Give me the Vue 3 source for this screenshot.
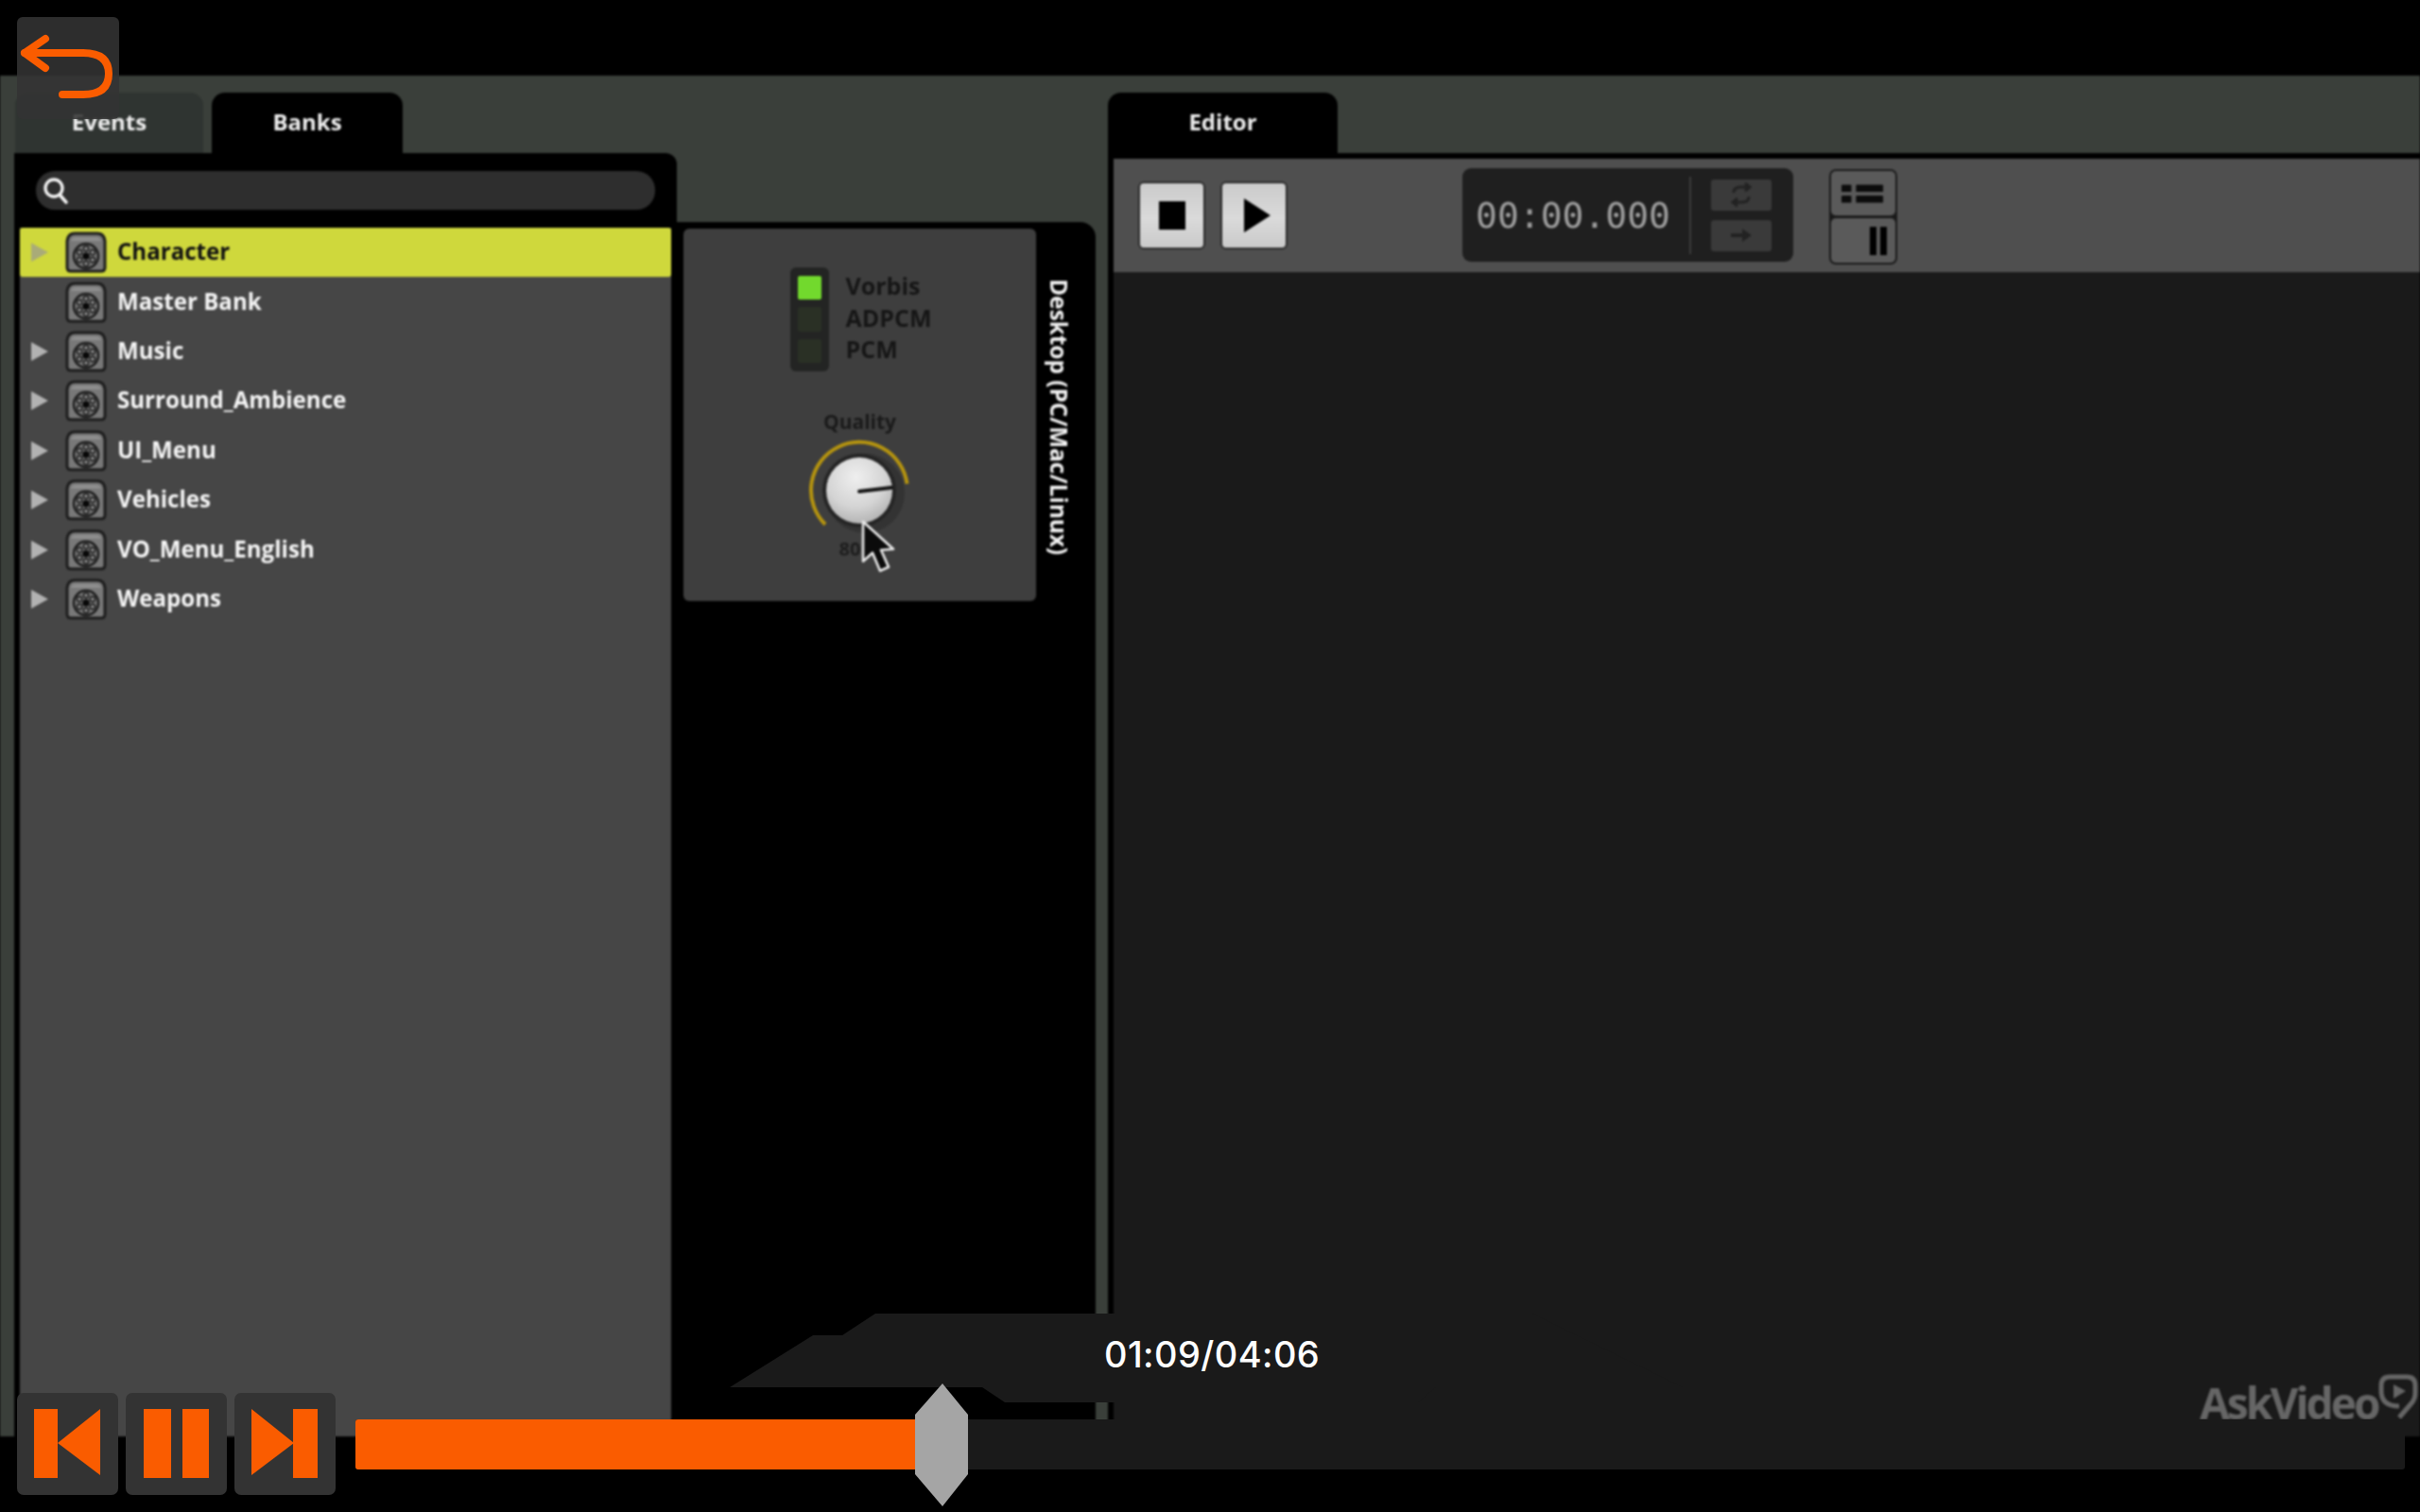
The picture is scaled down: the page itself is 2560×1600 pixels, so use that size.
<template>
  <div class="screen">
    <header class="top-bar"></header>

    <main class="workspace">
      <section class="browser">
        <nav class="tabs">
          <div class="tab tab--off">Events</div>
          <div class="tab tab--on">Banks</div>
        </nav>
        <div class="browser-panel">
          <div class="search">
            <svg width="30" height="30" viewBox="0 0 30 30">
              <circle cx="13" cy="12" r="9" fill="none" stroke="#f1f1f1" stroke-width="3.4" />
              <path d="M19 19 L26 27" stroke="#f1f1f1" stroke-width="3.6" stroke-linecap="round" />
            </svg>
          </div>
          <ul class="tree">
            <li v-for="bank in banks" :key="bank.name" class="row" :class="{ 'row--active': bank.active }">
              <span class="arrow" :class="{ 'arrow--none': !bank.children }"></span>
              <svg class="bank-icon" width="44" height="44" viewBox="0 0 44 44">
                <path d="M2 10 Q3 2 10 2 H34 Q41 2 42 10 V38 Q42 42 38 42 H6 Q2 42 2 38 Z" fill="#787878" stroke="#1d1d1d" stroke-width="3" stroke-linejoin="round" />
                <path d="M6 10 Q7 6 11 6 H33 Q37 6 38 10 Z" fill="#8e8e8e" />
                <circle cx="22" cy="26" r="13" fill="none" stroke="#1c1c1c" stroke-width="2.4" />
                <circle cx="22" cy="26" r="3.8" fill="#080808" />
                <circle v-for="a in spokes" :key="a" :cx="22 + 8 * Math.cos(a)" :cy="26 + 8 * Math.sin(a)" r="2.6" fill="#999" stroke="#1c1c1c" stroke-width="1.6" />
              </svg>
              <span class="row-label">{{ bank.name }}</span>
            </li>
          </ul>
        </div>
      </section>

      <section class="platform">
        <div class="platform-card">
          <div class="encoding">
            <div class="leds">
              <span class="led led--on"></span>
              <span class="led"></span>
              <span class="led"></span>
            </div>
            <div class="encoding-names">
              <span>Vorbis</span>
              <span>ADPCM</span>
              <span>PCM</span>
            </div>
          </div>
          <div class="quality">Quality</div>
          <svg class="knob" width="130" height="126" viewBox="0 0 130 126">
            <defs>
              <radialGradient id="knobFill" cx="45%" cy="30%" r="75%">
                <stop offset="0" stop-color="#efefef" />
                <stop offset="0.6" stop-color="#d4d4d4" />
                <stop offset="1" stop-color="#aeaeae" />
              </radialGradient>
            </defs>
            <circle cx="70" cy="60" r="42" fill="#333" />
            <path d="M28 93 A51 51 0 1 1 114.5 50" fill="none" stroke="#b4930f" stroke-width="4" />
            <circle cx="64" cy="57" r="39" fill="#252525" />
            <circle cx="64" cy="57" r="35" fill="url(#knobFill)" />
            <path d="M64 58 L98 54" stroke="#151515" stroke-width="4" stroke-linecap="round" />
          </svg>
          <div class="quality-value">80</div>
          <svg class="cursor" width="40" height="60" viewBox="0 0 40 60">
            <path d="M3 2 V44 L13 35 L21 54 L30 50 L22 32 L35 31 Z" fill="#0b0b0b" stroke="#e8e8e8" stroke-width="2.6" stroke-linejoin="round" />
          </svg>
        </div>
        <div class="platform-name">Desktop (PC/Mac/Linux)</div>
      </section>

      <section class="editor">
        <nav class="tabs tabs--editor">
          <div class="tab tab--on tab--editor">Editor</div>
        </nav>
        <div class="editor-panel">
          <div class="transport">
            <div class="play-buttons">
              <button class="key">
                <span class="stop-shape"></span>
              </button>
              <button class="key">
                <span class="play-shape"></span>
              </button>
            </div>
            <div class="timer">
              <span class="timer-value">00:00.000</span>
              <span class="timer-sep"></span>
              <div class="timer-modes">
                <span class="mode">
                  <svg width="28" height="28" viewBox="0 0 28 28" fill="none" stroke="#222" stroke-width="3">
                    <path d="M6 12 Q6 6 13 6 H22 M18 2 L23 6 L18 10" />
                    <path d="M22 16 Q22 22 15 22 H6 M10 18 L5 22 L10 26" />
                  </svg>
                </span>
                <span class="mode">
                  <svg width="28" height="20" viewBox="0 0 28 20">
                    <path d="M3 8 H15 V3 L25 10 L15 17 V12 H3 Z" fill="#222" />
                  </svg>
                </span>
              </div>
            </div>
            <div class="view-buttons">
              <span class="view-btn">
                <svg width="48" height="24" viewBox="0 0 48 24" fill="#0c0c0c">
                  <rect x="0" y="2" width="11" height="8" rx="1" />
                  <rect x="16" y="2" width="30" height="8" rx="1" />
                  <rect x="0" y="14" width="11" height="8" rx="1" />
                  <rect x="16" y="14" width="30" height="8" rx="1" />
                </svg>
              </span>
              <span class="view-btn view-btn--pause">
                <i></i>
                <i></i>
              </span>
            </div>
          </div>
          <div class="editor-body"></div>
        </div>
      </section>
    </main>

    <button class="back-btn">
      <svg width="108" height="108" viewBox="0 0 108 108" fill="none" stroke="#fa5c00" stroke-width="8" stroke-linecap="round" stroke-linejoin="round">
        <path d="M30 23 L8 38 L30 54" />
        <path d="M8 38 H70 Q97 38 97 60 Q97 82 70 82 H48" />
      </svg>
    </button>

    <svg class="time-shape" width="1100" height="100" viewBox="0 0 1100 100">
      <polygon points="154,0 849,0 1008,78 747,78 728,94 291,94 267,78 0,78 88,23 119,23" fill="#1a1a1a" />
    </svg>
    <div class="time-label">01:09/04:06</div>

    <div class="watermark">
      <span>AskVideo</span>
      <svg width="42" height="48" viewBox="0 0 42 48">
        <path d="M12 3 H30 Q39 3 39 12 V20 Q39 27 34 32 L22 46 M22 34 Q3 34 3 18 V12 Q3 3 12 3" fill="none" stroke="#666" stroke-width="5" />
        <path d="M16 11 L29 18 L16 26 Z" fill="#666" />
      </svg>
    </div>

    <footer class="player">
      <div class="player-buttons">
        <button class="pbtn">
          <svg width="72" height="74" viewBox="0 0 72 74" fill="#fa5c00">
            <rect x="0" y="0" width="25" height="73" />
            <path d="M25 36 L70 0 V70 Z" />
          </svg>
        </button>
        <button class="pbtn">
          <svg width="70" height="74" viewBox="0 0 70 74" fill="#fa5c00">
            <rect x="0" y="0" width="29" height="73" />
            <rect x="41" y="0" width="28" height="73" />
          </svg>
        </button>
        <button class="pbtn">
          <svg width="72" height="74" viewBox="0 0 72 74" fill="#fa5c00">
            <path d="M0 0 L45 36 L0 70 Z" />
            <rect x="44" y="0" width="26" height="73" />
          </svg>
        </button>
      </div>
      <div class="track">
        <div class="track-fill" :style="{ width: progress + 'px' }"></div>
        <svg class="thumb" width="56" height="130" viewBox="0 0 56 130">
          <polygon points="29,0 56,33 56,96 29,130 0,96 0,33" fill="#a5a5a5" />
        </svg>
      </div>
    </footer>
  </div>
</template>

<script setup>
const banks = [
  { name: 'Character', children: true, active: true },
  { name: 'Master Bank', children: false },
  { name: 'Music', children: true },
  { name: 'Surround_Ambience', children: true },
  { name: 'UI_Menu', children: true },
  { name: 'Vehicles', children: true },
  { name: 'VO_Menu_English', children: true },
  { name: 'Weapons', children: true },
]

const spokes = [0, 1, 2, 3, 4, 5].map(i => (i * Math.PI) / 3 + Math.PI / 6)

const progress = 594
</script>

<style>
html, body {
  margin: 0;
  background: #000;
}
</style>

<style scoped>
.screen {
  position: relative;
  width: 2560px;
  height: 1600px;
  overflow: hidden;
  background: #000;
  font-family: "Open Sans", "Liberation Sans", sans-serif;
}

button {
  border: 0;
  padding: 0;
  font: inherit;
}

.top-bar {
  height: 80px;
  background: #000;
}

.workspace {
  display: flex;
  height: 1440px;
  padding-left: 15px;
  box-sizing: border-box;
  background: #3a3f3a;
  overflow: hidden;
  filter: blur(0.8px);
}

/* banks browser */
.browser {
  display: flex;
  flex-direction: column;
  width: 701px;
  flex: none;
}

.tabs {
  display: flex;
  height: 64px;
  margin-top: 18px;
  padding-left: 1px;
  gap: 9px;
  flex: none;
}

.tab {
  display: flex;
  align-items: center;
  justify-content: center;
  box-sizing: border-box;
  padding-bottom: 4px;
  border-radius: 14px 14px 0 0;
  font-size: 24px;
  font-weight: 700;
  color: #eee;
}

.tab--off {
  width: 199px;
  background: #2f3431;
}

.tab--on {
  width: 202px;
  background: #000;
}

.browser-panel {
  flex: 1;
  display: flex;
  flex-direction: column;
  background: #000;
  border-radius: 0 12px 0 0;
}

.search {
  display: flex;
  align-items: center;
  height: 41px;
  margin: 19px 23px 19px 23px;
  padding-left: 6px;
  box-sizing: border-box;
  border-radius: 20px;
  background: #2e2e2e;
}

.tree {
  flex: 1;
  margin: 0 6px;
  padding: 0;
  list-style: none;
  background: #464646;
}

.row {
  display: flex;
  align-items: center;
  height: 52.4px;
  padding-left: 12px;
  box-sizing: border-box;
  color: #f4f4f4;
  font-size: 24.1px;
  font-weight: 700;
}

.row--active {
  background: #cfd83c;
  border-radius: 3px;
  color: #111;
}

.arrow {
  width: 0;
  height: 0;
  flex: none;
  margin-right: 18px;
  border-left: 18px solid #b2b2b2;
  border-top: 10px solid transparent;
  border-bottom: 10px solid transparent;
}

.row--active .arrow {
  border-left-color: #a9ab78;
}

.arrow--none {
  border-left-color: transparent;
}

.bank-icon {
  flex: none;
}

.row-label {
  margin: -3px 0 0 11px;
  white-space: nowrap;
}

/* platform settings */
.platform {
  display: flex;
  align-items: flex-start;
  width: 443px;
  flex: none;
  margin-top: 155px;
  padding: 7px 0 0 7px;
  box-sizing: border-box;
  background: #000;
  border-radius: 0 16px 0 0;
}

.platform-card {
  position: relative;
  display: flex;
  flex-direction: column;
  align-items: center;
  width: 373px;
  height: 394px;
  padding-top: 41px;
  box-sizing: border-box;
  flex: none;
  background: #3e3e3e;
  border-radius: 6px;
}

.encoding {
  display: flex;
  gap: 18px;
  margin-left: 2px;
}

.leds {
  display: flex;
  flex-direction: column;
  gap: 8px;
  width: 41px;
  height: 110px;
  padding: 9px 8px;
  box-sizing: border-box;
  border-radius: 6px;
  background: #232423;
}

.led {
  height: 26px;
  border-radius: 2px;
  background: #2a3025;
}

.led--on {
  background: #72d92d;
}

.encoding-names {
  display: flex;
  flex-direction: column;
  gap: 0;
  padding-top: 3px;
  color: #161616;
  font-size: 25px;
  font-weight: 700;
  line-height: 33.5px;
}

.quality {
  margin-top: 38px;
  color: #1a1a1a;
  font-size: 21px;
  font-weight: 700;
  line-height: 30px;
}

.knob {
  margin-top: 1px;
  margin-left: 0;
}

.quality-value {
  width: 44px;
  margin-top: -20px;
  color: #1e1e1e;
  font-size: 20px;
  font-weight: 700;
  line-height: 26px;
}

.cursor {
  position: absolute;
  left: 187px;
  top: 308px;
}

.platform-name {
  margin: 53px 0 0 8px;
  writing-mode: vertical-rl;
  color: #f2f2f2;
  font-size: 24.4px;
  font-weight: 700;
  white-space: nowrap;
}

/* editor */
.editor {
  display: flex;
  flex-direction: column;
  flex: 1;
  margin-left: 13px;
  min-width: 0;
}

.tabs--editor {
  padding-left: 0;
}

.tab--editor {
  width: 243px;
}

.editor-panel {
  flex: 1;
  display: flex;
  flex-direction: column;
  padding: 6px 0 0 6px;
  background: #000;
}

.transport {
  display: flex;
  align-items: flex-start;
  height: 120px;
  flex: none;
  box-sizing: border-box;
  background: #4f4f4f;
}

.play-buttons {
  display: flex;
  gap: 16px;
  margin: 24px 0 0 26px;
}

.key {
  display: flex;
  align-items: center;
  justify-content: center;
  width: 71px;
  height: 72px;
  box-sizing: border-box;
  border: 2px solid #2a2a2a;
  border-radius: 6px;
  background: linear-gradient(#cbcbcb, #dadada 55%, #cacaca);
}

.stop-shape {
  width: 28px;
  height: 30px;
  background: #000;
}

.play-shape {
  width: 0;
  height: 0;
  margin-left: 6px;
  border-left: 28px solid #000;
  border-top: 18px solid transparent;
  border-bottom: 18px solid transparent;
}

.timer {
  display: flex;
  align-items: center;
  width: 350px;
  height: 99px;
  margin: 10px 0 0 185px;
  padding-left: 14px;
  box-sizing: border-box;
  border-radius: 9px;
  background: #1f1f1f;
}

.timer-value {
  width: 226px;
  color: #9c9c9c;
  font-family: "DejaVu Sans Mono", "Liberation Mono", monospace;
  font-size: 38px;
  white-space: nowrap;
}

.timer-sep {
  width: 2px;
  height: 82px;
  background: #3a3a3a;
}

.timer-modes {
  display: flex;
  flex-direction: column;
  gap: 10px;
  margin-left: 21px;
}

.mode {
  display: flex;
  align-items: center;
  justify-content: center;
  width: 64px;
  height: 33px;
  border-radius: 3px;
  background: #3a3a3a;
}

.view-buttons {
  display: flex;
  flex-direction: column;
  gap: 0;
  width: 72px;
  margin: 11px 0 0 38px;
  padding: 2px;
  box-sizing: border-box;
  border-radius: 7px;
  background: #1a1a1a;
}

.view-btn {
  display: flex;
  align-items: center;
  justify-content: center;
  height: 47px;
  border-radius: 5px;
  background: #5a5a5a;
}

.view-btn + .view-btn {
  margin-top: 3px;
}

.view-btn svg {
  width: 46px;
}

.view-btn--pause {
  justify-content: flex-end;
  gap: 4px;
  padding-right: 9px;
}

.view-btn--pause i {
  display: block;
  width: 7px;
  height: 30px;
  background: #000;
}

.editor-body {
  flex: 1;
  background: #1a1a1a;
}

/* video player overlay */
.back-btn {
  position: absolute;
  left: 18px;
  top: 18px;
  width: 108px;
  height: 108px;
  border-radius: 6px;
  background: rgba(51, 51, 51, 0.88);
}

.back-btn svg {
  position: absolute;
  left: 0;
  top: 0;
}

.time-shape {
  position: absolute;
  left: 772px;
  top: 1390px;
}

.time-label {
  position: absolute;
  left: 1168px;
  top: 1411px;
  color: #fff;
  font-family: Inter, "Liberation Sans", sans-serif;
  font-size: 38px;
  font-weight: 500;
  line-height: 45px;
  letter-spacing: 0.4px;
}

.watermark {
  position: absolute;
  left: 2327px;
  top: 1454px;
  display: flex;
  align-items: flex-start;
  height: 48px;
  color: #666;
  font-size: 46px;
  font-weight: 700;
  letter-spacing: -2.9px;
  line-height: 48px;
  filter: blur(0.8px);
}

.watermark span {
  margin-top: 6px;
}

.player {
  position: absolute;
  left: 18px;
  top: 1464px;
  display: flex;
  align-items: flex-start;
}

.player-buttons {
  display: flex;
  gap: 8px;
  margin-top: 10px;
}

.pbtn {
  display: flex;
  align-items: center;
  justify-content: center;
  width: 107px;
  height: 108px;
  border-radius: 7px;
  background: #333;
}

.track {
  position: relative;
  width: 2168px;
  height: 53px;
  margin: 38px 0 0 21px;
  border-radius: 3px;
  background: #1a1a1a;
}

.track-fill {
  height: 100%;
  border-radius: 3px 0 0 3px;
  background: #fa5c00;
}

.thumb {
  position: absolute;
  left: 592px;
  top: -38px;
}
</style>
